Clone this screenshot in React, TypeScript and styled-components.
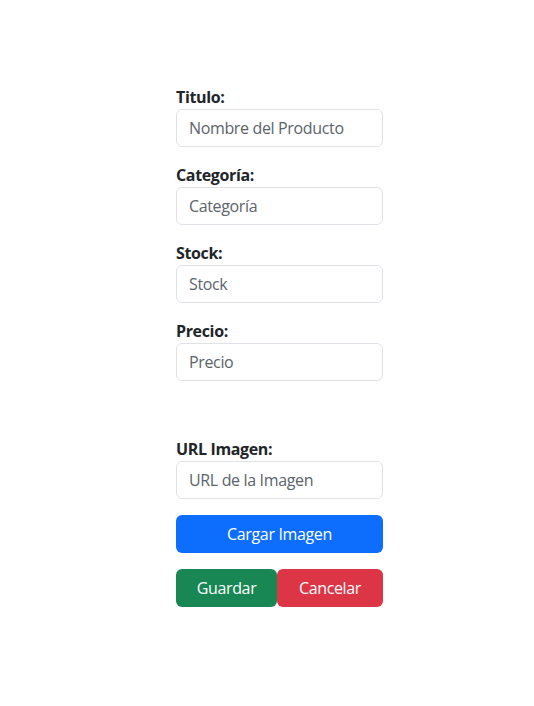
import React from "react";
import styled, { createGlobalStyle } from "styled-components";

const Global = createGlobalStyle`
  html, body { margin: 0; padding: 0; background: #fff; }
  body { font-family: "Segoe UI", "Open Sans", sans-serif; color: #212529; font-size: 16px; line-height: 1.5; letter-spacing: -0.35px; }
  * { box-sizing: border-box; }
`;

const Page = styled.div`
  padding: 85px 0 0 176px;
`;

const Form = styled.form`
  width: 207px;
  display: flex;
  flex-direction: column;
`;

const Field = styled.div<{ $extra?: number }>`
  display: flex;
  flex-direction: column;
  margin-bottom: ${(p) => 16 + (p.$extra || 0)}px;
`;

const Label = styled.label`
  font-weight: 700;
  font-size: 16px;
  line-height: 24px;
`;

const Input = styled.input`
  height: 38px;
  width: 100%;
  padding: 6px 12px;
  font: inherit;
  letter-spacing: inherit;
  color: #212529;
  border: 1px solid #dee2e6;
  border-radius: 6px;
  background: #fff;
  &::placeholder { color: #5c636a; }
`;

const Button = styled.button<{ $variant: "primary" | "success" | "danger"; $width?: number }>`
  height: 38px;
  padding: 6px 12px;
  font: inherit;
  letter-spacing: inherit;
  color: #fff;
  border: 1px solid transparent;
  border-radius: 6px;
  cursor: pointer;
  background: ${(p) => (p.$variant === "primary" ? "#0d6efd" : p.$variant === "success" ? "#198754" : "#dc3545")};
  ${(p) => (p.$width ? `width: ${p.$width}px;` : "flex: 1;")}
`;

const Row = styled.div`
  display: flex;
  margin-top: 16px;
`;

const fields = [
  { label: "Titulo:", ph: "Nombre del Producto" },
  { label: "Categoría:", ph: "Categoría" },
  { label: "Stock:", ph: "Stock" },
  { label: "Precio:", ph: "Precio", extra: 40 },
  { label: "URL Imagen:", ph: "URL de la Imagen" },
];

export default function App() {
  return (
    <>
      <Global />
      <Page>
        <Form onSubmit={(e) => e.preventDefault()}>
          {fields.map((f) => (
            <Field key={f.label} $extra={f.extra}>
              <Label>{f.label}</Label>
              <Input placeholder={f.ph} />
            </Field>
          ))}
          <Button type="button" $variant="primary">Cargar Imagen</Button>
          <Row>
            <Button type="submit" $variant="success" $width={101}>Guardar</Button>
            <Button type="button" $variant="danger">Cancelar</Button>
          </Row>
        </Form>
      </Page>
    </>
  );
}
